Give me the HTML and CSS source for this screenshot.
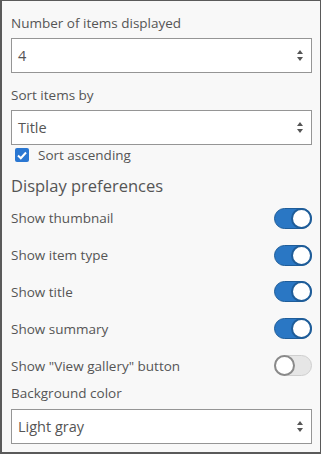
FILE: index.html
```html
<!DOCTYPE html>
<html lang="en">
<head>
    <meta charset="UTF-8">
    <title>Gallery settings</title>
    <link rel="stylesheet" href="styles.css">
</head>
<body>
    <div class="panel">
        <label class="field-label">Number of items displayed</label>
        <div class="select-box">
            <span>4</span>
            <span class="arrows"></span>
        </div>

        <label class="field-label">Sort items by</label>
        <div class="select-box">
            <span>Title</span>
            <span class="arrows"></span>
        </div>

        <div class="check-row">
            <span class="checkbox">
                <svg width="10" height="9" viewBox="0 0 10 9"><path d="M1 4.5 L3.8 7.2 L9 1.5" fill="none" stroke="#fff" stroke-width="2"/></svg>
            </span>
            <span>Sort ascending</span>
        </div>

        <h2 class="section-title">Display preferences</h2>

        <div class="toggle-row"><span>Show thumbnail</span><span class="toggle on"></span></div>
        <div class="toggle-row"><span>Show item type</span><span class="toggle on"></span></div>
        <div class="toggle-row"><span>Show title</span><span class="toggle on"></span></div>
        <div class="toggle-row"><span>Show summary</span><span class="toggle on"></span></div>
        <div class="toggle-row"><span>Show "View gallery" button</span><span class="toggle"></span></div>

        <label class="field-label last">Background color</label>
        <div class="select-box">
            <span>Light gray</span>
            <span class="arrows"></span>
        </div>
    </div>
</body>
</html>
```

FILE: styles.css
```css
body {
    margin: 0;
    font-family: 'Open Sans', sans-serif;
    color: #555555;
    background: #ffffff;
}

.panel {
    width: 321px;
    height: 454px;
    box-sizing: border-box;
    background: #f8f8f8;
    border: 1px solid #5a5a5a;
    border-left-width: 2px;
    border-bottom-width: 2px;
    padding: 12px 8px 0 9px;
}

.field-label {
    display: block;
    font-size: 13.5px;
    line-height: 20px;
    margin-bottom: 5px;
}

.field-label.last {
    margin-top: -1px;
    margin-bottom: 6px;
}

.select-box {
    height: 35px;
    box-sizing: border-box;
    background: #ffffff;
    border: 1px solid #959595;
    display: flex;
    align-items: center;
    justify-content: space-between;
    padding: 0 7px 0 6px;
    font-size: 14.5px;
    margin-bottom: 12px;
}

.arrows {
    position: relative;
    width: 7px;
    height: 11px;
}

.arrows::before,
.arrows::after {
    content: '';
    position: absolute;
    left: 0;
    border-left: 3.5px solid transparent;
    border-right: 3.5px solid transparent;
}

.arrows::before {
    top: 0;
    border-bottom: 4px solid #555;
}

.arrows::after {
    bottom: 0;
    border-top: 4px solid #555;
}

.check-row {
    display: flex;
    align-items: center;
    gap: 9px;
    font-size: 13.5px;
    margin: -11px 0 0 4px;
    height: 18px;
}

.checkbox {
    width: 14px;
    height: 14px;
    background: #2a77d2;
    border-radius: 2px;
    display: flex;
    align-items: center;
    justify-content: center;
}

.section-title {
    font-size: 16.5px;
    font-weight: normal;
    margin: 11px 0 3px;
    line-height: 22px;
}

.toggle-row {
    display: flex;
    align-items: center;
    justify-content: space-between;
    height: 36.8px;
    font-size: 13.5px;
}

.toggle {
    width: 38px;
    height: 21px;
    box-sizing: border-box;
    border-radius: 11px;
    background: #e6e6e6;
    border: 1px solid #cfcfcf;
    position: relative;
}

.toggle::after {
    content: '';
    position: absolute;
    top: -1px;
    left: -1px;
    width: 21px;
    height: 21px;
    box-sizing: border-box;
    border-radius: 50%;
    background: #ffffff;
    border: 2px solid #8a8a8a;
}

.toggle.on {
    background: #2a77c4;
    border-color: #1f5d99;
}

.toggle.on::after {
    left: auto;
    right: -1px;
    border-color: #1f5d99;
}
```
